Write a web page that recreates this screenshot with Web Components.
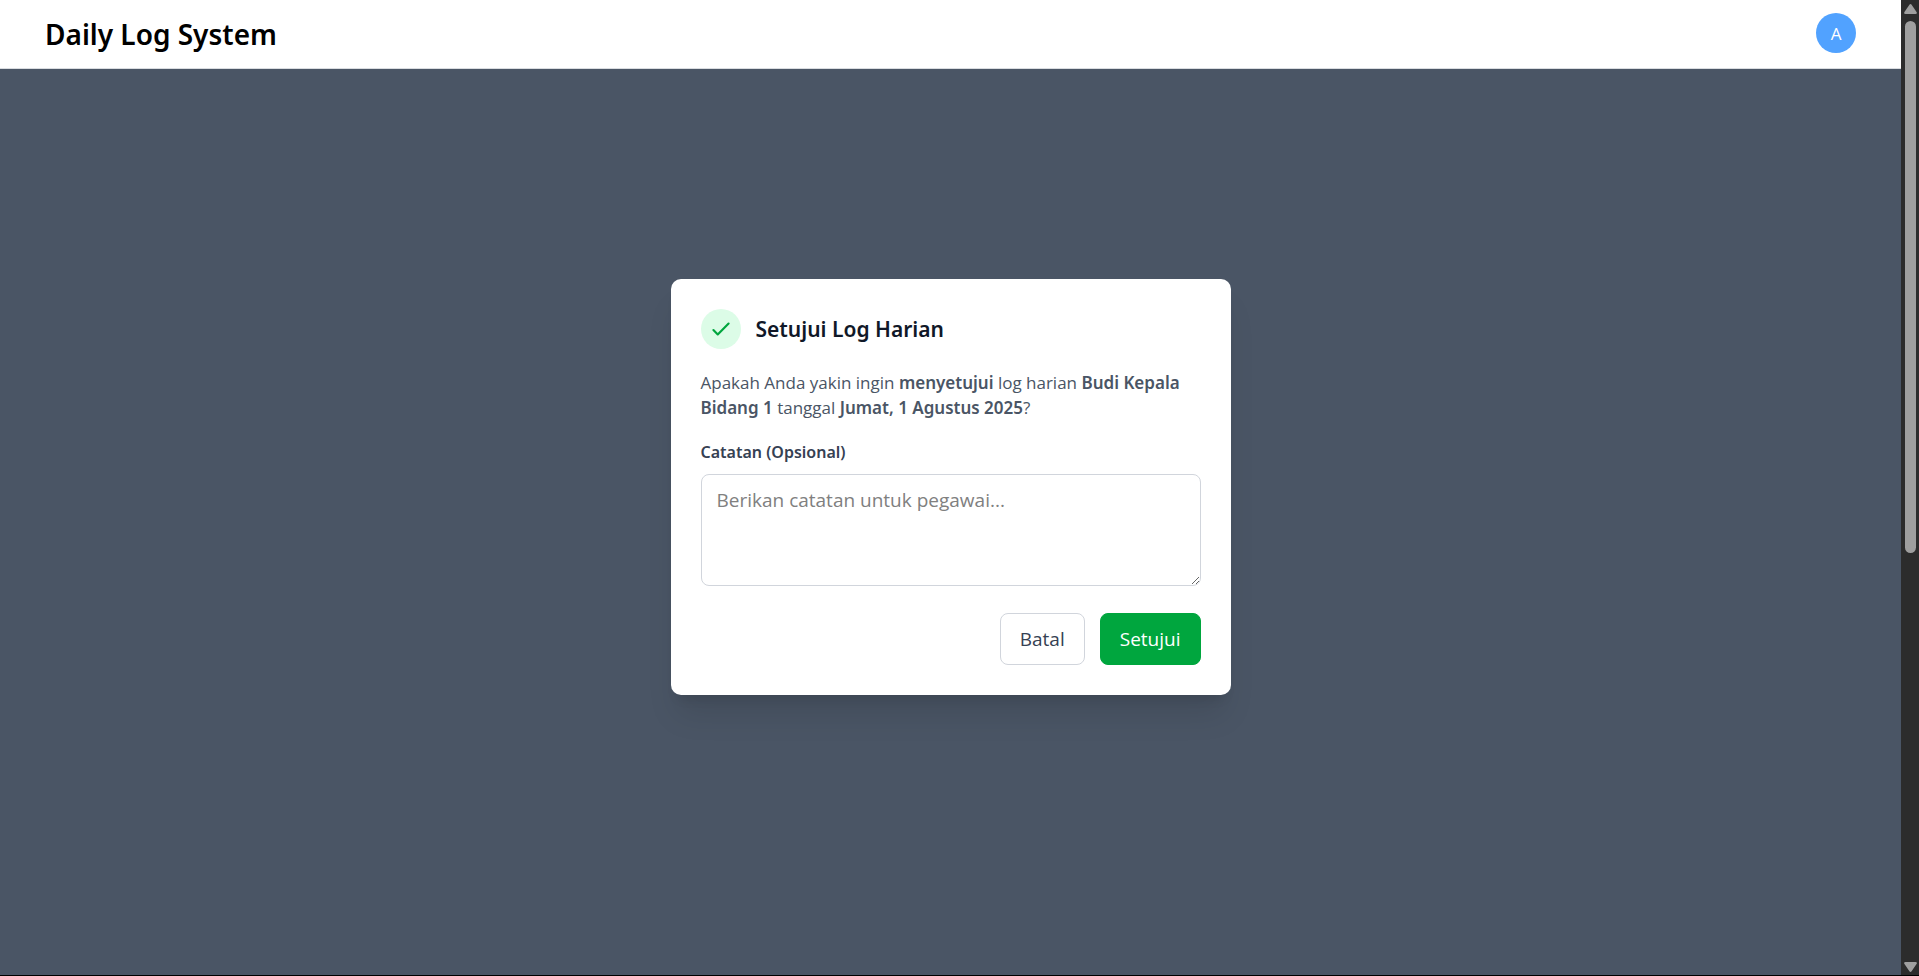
<!DOCTYPE html>
<html lang="id">
<head>
<meta charset="utf-8">
<title>Daily Log System</title>
<style>
  html, body { height: 100%; margin: 0; }
  body { font-family: "Open Sans", "Noto Sans", sans-serif; background: #4a5565; overflow: hidden; }
</style>
</head>
<body>
<app-shell>
  <app-header slot="header" initial="A">Daily Log System</app-header>
  <approve-dialog heading="Setujui Log Harian">
    <approve-message employee="Budi Kepala Bidang 1" date="Jumat, 1 Agustus 2025"></approve-message>
    <note-field label="Catatan (Opsional)" placeholder="Berikan catatan untuk pegawai..."></note-field>
    <action-button slot="actions">Batal</action-button>
    <action-button slot="actions" primary>Setujui</action-button>
  </approve-dialog>
  <scroll-rail slot="rail"></scroll-rail>
</app-shell>

<script>
function define(name, html, setup) {
  const template = document.createElement('template');
  template.innerHTML = html;
  customElements.define(name, class extends HTMLElement {
    constructor() {
      super();
      this.attachShadow({ mode: 'open' }).append(template.content.cloneNode(true));
    }
    connectedCallback() {
      if (setup) setup(this, this.shadowRoot);
    }
  });
}

define('app-shell', `
  <style>
    :host { display: flex; box-sizing: border-box; height: 100vh; border-bottom: 1px solid #000; background: #4a5565; }
    .page { flex: 1; min-width: 0; display: flex; flex-direction: column; }
    main { flex: 1; display: flex; align-items: center; justify-content: center; padding: 0 20px 70px; }
  </style>
  <div class="page">
    <slot name="header"></slot>
    <main><slot></slot></main>
  </div>
  <slot name="rail"></slot>`);

define('app-header', `
  <style>
    :host { display: block; }
    header { display: flex; align-items: flex-start; justify-content: space-between; padding: 13px 45px; background: #fff; border-bottom: 1px solid #d9dce0; }
    h1 { margin: 0; font-family: "Noto Sans", sans-serif; font-size: 28px; line-height: 42px; font-weight: 600; color: #000; }
    button { width: 40px; height: 40px; padding: 0; border: 0; border-radius: 50%; background: #51a2ff; color: #fff; font-family: inherit; font-size: 17px; line-height: 42px; }
  </style>
  <header>
    <h1><slot></slot></h1>
    <button type="button"></button>
  </header>`, (el, root) => {
  root.querySelector('button').textContent = el.getAttribute('initial');
});

define('approve-dialog', `
  <style>
    :host { display: block; width: 100%; max-width: 560px; }
    section { box-sizing: border-box; padding: 30px; border-radius: 10px; background: #fff; box-shadow: 0 25px 31px -6px rgba(0,0,0,.1), 0 10px 12px -7px rgba(0,0,0,.1); }
    .title { display: flex; align-items: center; gap: 15px; margin-bottom: 21px; }
    .badge { display: flex; align-items: center; justify-content: center; width: 40px; height: 40px; border-radius: 50%; background: #dcfce7; }
    h2 { margin: 0; font-family: "Noto Sans", sans-serif; font-size: 21px; line-height: 35px; font-weight: 600; color: #101828; }
    .actions { display: flex; justify-content: flex-end; gap: 15px; margin-top: 27px; }
  </style>
  <section role="dialog" aria-labelledby="heading">
    <div class="title">
      <div class="badge">
        <svg width="26" height="26" viewBox="0 0 24 24" fill="none" stroke="#00a63e" stroke-width="2" stroke-linecap="round" stroke-linejoin="round" aria-hidden="true">
          <path d="M5 13l4 4L19 7"/>
        </svg>
      </div>
      <h2 id="heading"></h2>
    </div>
    <slot></slot>
    <div class="actions"><slot name="actions"></slot></div>
  </section>`, (el, root) => {
  root.querySelector('h2').textContent = el.getAttribute('heading');
});

define('approve-message', `
  <style>
    :host { display: block; margin-bottom: 19px; }
    p { margin: 0; font-size: 17px; line-height: 25px; color: #4a5565; }
    strong { font-family: "Noto Sans", sans-serif; font-weight: 600; }
  </style>
  <p>Apakah Anda yakin ingin <strong>menyetujui</strong> log harian <strong class="employee"></strong> tanggal <strong class="date"></strong>?</p>`, (el, root) => {
  root.querySelector('.employee').textContent = el.getAttribute('employee');
  root.querySelector('.date').textContent = el.getAttribute('date');
});

define('note-field', `
  <style>
    :host { display: block; }
    label { display: block; margin-bottom: 8px; font-family: "Noto Sans", sans-serif; font-size: 16px; line-height: 27px; font-weight: 600; color: #364153; }
    textarea { display: block; box-sizing: border-box; width: 100%; height: 112px; padding: 10px 15px; border: 1px solid #d1d5dc; border-radius: 8px; background: #fff; font-family: inherit; font-size: 19px; line-height: 30px; color: #101828; resize: vertical; outline: 0; }
    textarea::placeholder { color: #808080; }
  </style>
  <label for="note"></label>
  <textarea id="note"></textarea>`, (el, root) => {
  root.querySelector('label').textContent = el.getAttribute('label');
  root.querySelector('textarea').placeholder = el.getAttribute('placeholder');
});

define('action-button', `
  <style>
    :host { display: block; }
    button { display: block; padding: 10px 19px; border: 1px solid #d1d5dc; border-radius: 8px; background: #fff; color: #364153; font-family: inherit; font-size: 19px; line-height: 30px; }
    :host([primary]) button { border-color: #00a63e; background: #00a63e; color: #fff; }
  </style>
  <button type="button"><slot></slot></button>`);

define('scroll-rail', `
  <style>
    :host { display: flex; flex-direction: column; align-items: center; box-sizing: border-box; width: 18px; padding: 4px 0 3px; background: #2c2c2c; }
    svg { display: block; fill: #9f9f9f; }
    .track { flex: 1; width: 11px; margin: 7px 0; }
    .thumb { height: 57%; border-radius: 6px; background: #9f9f9f; }
  </style>
  <svg width="13" height="10" viewBox="0 0 13 10" aria-hidden="true"><path d="M5.4.7a1.4 1.4 0 012.2 0l5.1 7.5q.7 1.8-1.2 1.8h-10Q-.4 10 .3 8.2z"/></svg>
  <div class="track"><div class="thumb"></div></div>
  <svg width="13" height="10" viewBox="0 0 13 10" aria-hidden="true"><path d="M5.4 9.3a1.4 1.4 0 002.2 0l5.1-7.5q.7-1.8-1.2-1.8h-10Q-.4 0 .3 1.8z"/></svg>`);
</script>
</body>
</html>
